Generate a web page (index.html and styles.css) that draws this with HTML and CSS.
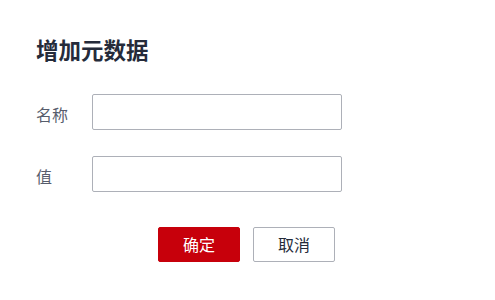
FILE: index.html
```html
<!DOCTYPE html>
<html lang="zh-CN">
<head>
<meta charset="utf-8">
<link rel="stylesheet" href="styles.css">
</head>
<body>
<div class="dialog">
  <h1 class="title">增加元数据</h1>
  <div class="form">
    <div class="row">
      <label class="label">名称</label>
      <input class="input" type="text">
    </div>
    <div class="row">
      <label class="label">值</label>
      <input class="input" type="text">
    </div>
  </div>
  <div class="actions">
    <button class="btn btn-primary">确定</button>
    <button class="btn btn-default">取消</button>
  </div>
</div>
</body>
</html>
```

FILE: styles.css
```css
html, body {
  margin: 0;
  padding: 0;
  background: #ffffff;
}
body {
  font-family: "Noto Sans CJK SC", "Noto Sans", sans-serif;
  width: 495px;
  height: 300px;
  overflow: hidden;
}
.dialog {
  padding: 34px 36px 0 36px;
}
.title {
  margin: 0;
  font-size: 22.5px;
  line-height: 30px;
  font-weight: 700;
  color: #252b3a;
}
.form {
  margin-top: 30px;
  display: flex;
  flex-direction: column;
  gap: 26px;
}
.row {
  display: flex;
  align-items: flex-start;
}
.label {
  width: 56px;
  font-size: 16px;
  line-height: 22px;
  padding-top: 9px;
  color: #575d6c;
}
.input {
  box-sizing: border-box;
  width: 250px;
  height: 36px;
  margin: 0;
  border: 1px solid #adb0b8;
  border-radius: 2px;
  background: #fff;
  outline: none;
}
.actions {
  margin-top: 35px;
  padding-left: 122px;
  display: flex;
  gap: 13px;
}
.btn {
  box-sizing: border-box;
  width: 82px;
  height: 35px;
  margin: 0;
  padding: 0;
  border-radius: 2px;
  font-family: "Noto Sans CJK SC", "Noto Sans", sans-serif;
  font-size: 16px;
  line-height: 33px;
  cursor: pointer;
}
.btn-primary {
  background: #c7000b;
  border: 1px solid #c7000b;
  color: #ffffff;
}
.btn-default {
  background: #ffffff;
  border: 1px solid #adb0b8;
  color: #252b3a;
}
```
